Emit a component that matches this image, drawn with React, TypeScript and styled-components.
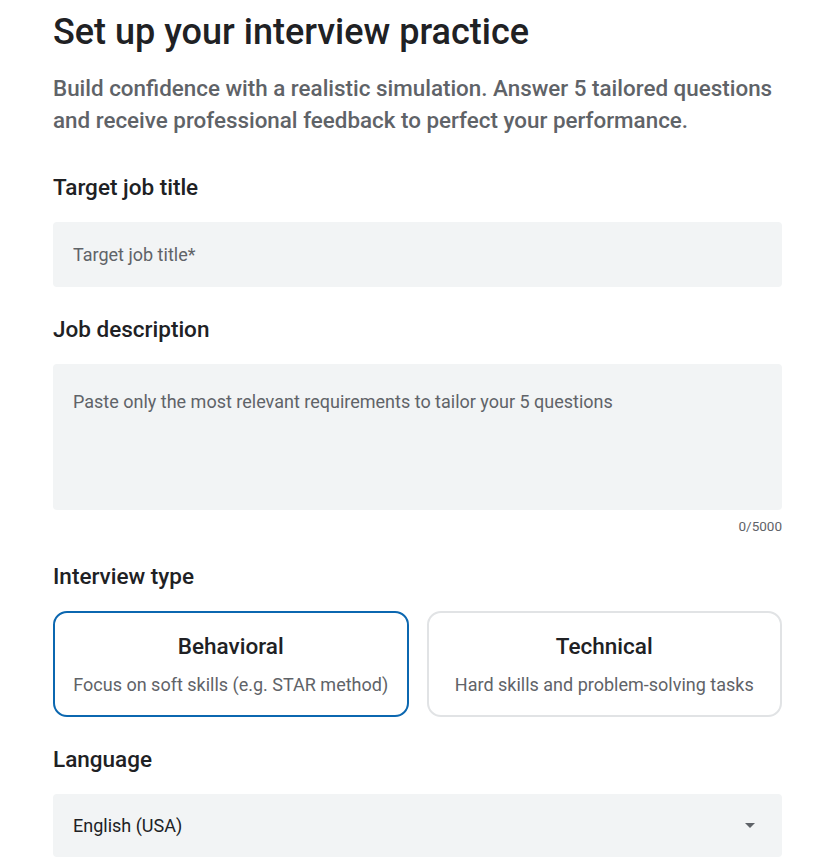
import React, { useState } from 'react';
import styled, { createGlobalStyle } from 'styled-components';

const GlobalStyle = createGlobalStyle`
  html, body {
    margin: 0;
    padding: 0;
    background: #ffffff;
  }
  body {
    font-family: Roboto, "Noto Sans", Arial, sans-serif;
    color: #202124;
  }
`;

const interviewTypes = [
  { id: 'behavioral', title: 'Behavioral', description: 'Focus on soft skills (e.g. STAR method)' },
  { id: 'technical', title: 'Technical', description: 'Hard skills and problem-solving tasks' },
];

const App = () => {
  const [type, setType] = useState('behavioral');
  const [jobTitle, setJobTitle] = useState('');
  const [description, setDescription] = useState('');

  return (
    <>
      <GlobalStyle />
      <Page>
        <Title>Set up your interview practice</Title>
        <Subtitle>
          Build confidence with a realistic simulation. Answer 5 tailored questions and receive
          professional feedback to perfect your performance.
        </Subtitle>

        <Section>
          <Label>Target job title</Label>
          <TextInput
            placeholder="Target job title*"
            value={jobTitle}
            onChange={(e) => setJobTitle(e.target.value)}
          />
        </Section>

        <Section>
          <Label>Job description</Label>
          <TextArea
            placeholder="Paste only the most relevant requirements to tailor your 5 questions"
            value={description}
            maxLength={5000}
            onChange={(e) => setDescription(e.target.value)}
          />
          <Counter>{description.length}/5000</Counter>
        </Section>

        <Section>
          <Label>Interview type</Label>
          <TypeGrid>
            {interviewTypes.map((item) => (
              <TypeCard
                key={item.id}
                type="button"
                $selected={type === item.id}
                onClick={() => setType(item.id)}
              >
                <CardTitle>{item.title}</CardTitle>
                <CardText>{item.description}</CardText>
              </TypeCard>
            ))}
          </TypeGrid>
        </Section>

        <Section>
          <Label>Language</Label>
          <SelectBox>
            <span>English (USA)</span>
            <Caret />
          </SelectBox>
        </Section>
      </Page>
    </>
  );
};

export default App;

const Page = styled.div`
  width: 729px;
  margin-left: 53px;
  padding-top: 12px;
  display: flex;
  flex-direction: column;
`;

const Title = styled.h1`
  margin: 0;
  font-size: 36px;
  line-height: 40px;
  font-weight: 500;
  color: #202124;
`;

const Subtitle = styled.p`
  margin: 20px 0 9px;
  font-size: 22.4px;
  line-height: 32px;
  font-weight: 500;
  color: #5f6368;
`;

const Section = styled.div`
  display: flex;
  flex-direction: column;
  margin-top: 27px;
`;

const Label = styled.div`
  font-size: 22.5px;
  line-height: 30px;
  font-weight: 500;
  color: #202124;
  margin-bottom: 20px;
`;

const fieldBase = `
  box-sizing: border-box;
  width: 100%;
  border: none;
  outline: none;
  border-radius: 4px;
  background: #f2f4f5;
  font-family: Roboto, "Noto Sans", Arial, sans-serif;
  font-size: 18px;
  color: #202124;
  padding: 0 20px;
`;

const TextInput = styled.input`
  ${fieldBase}
  height: 65px;

  &::placeholder {
    color: #5f6368;
  }
`;

const TextArea = styled.textarea`
  ${fieldBase}
  height: 146px;
  padding-top: 26px;
  line-height: 24px;
  resize: none;

  &::placeholder {
    color: #5f6368;
  }
`;

const Counter = styled.div`
  align-self: flex-end;
  margin-top: 8px;
  font-size: 13.5px;
  line-height: 16px;
  color: #5f6368;
`;

const TypeGrid = styled.div`
  display: grid;
  grid-template-columns: 1fr 1fr;
  gap: 18px;
`;

const TypeCard = styled.button<{ $selected: boolean }>`
  box-sizing: border-box;
  height: 106px;
  border-radius: 14px;
  border: 2px solid ${(p) => (p.$selected ? '#0b67b0' : '#e1e3e5')};
  background: #ffffff;
  display: flex;
  flex-direction: column;
  align-items: center;
  justify-content: center;
  gap: 13px;
  padding: 0;
  cursor: pointer;
  font-family: Roboto, "Noto Sans", Arial, sans-serif;
`;

const CardTitle = styled.span`
  font-size: 22.5px;
  line-height: 28px;
  font-weight: 500;
  color: #202124;
`;

const CardText = styled.span`
  font-size: 18px;
  line-height: 24px;
  color: #5f6368;
`;

const SelectBox = styled.div`
  ${fieldBase}
  height: 63px;
  display: flex;
  align-items: center;
  justify-content: space-between;
  padding-right: 27px;
  color: #202124;
  cursor: pointer;
`;

const Caret = styled.span`
  width: 0;
  height: 0;
  border-left: 5px solid transparent;
  border-right: 5px solid transparent;
  border-top: 5px solid #5f6368;
`;
